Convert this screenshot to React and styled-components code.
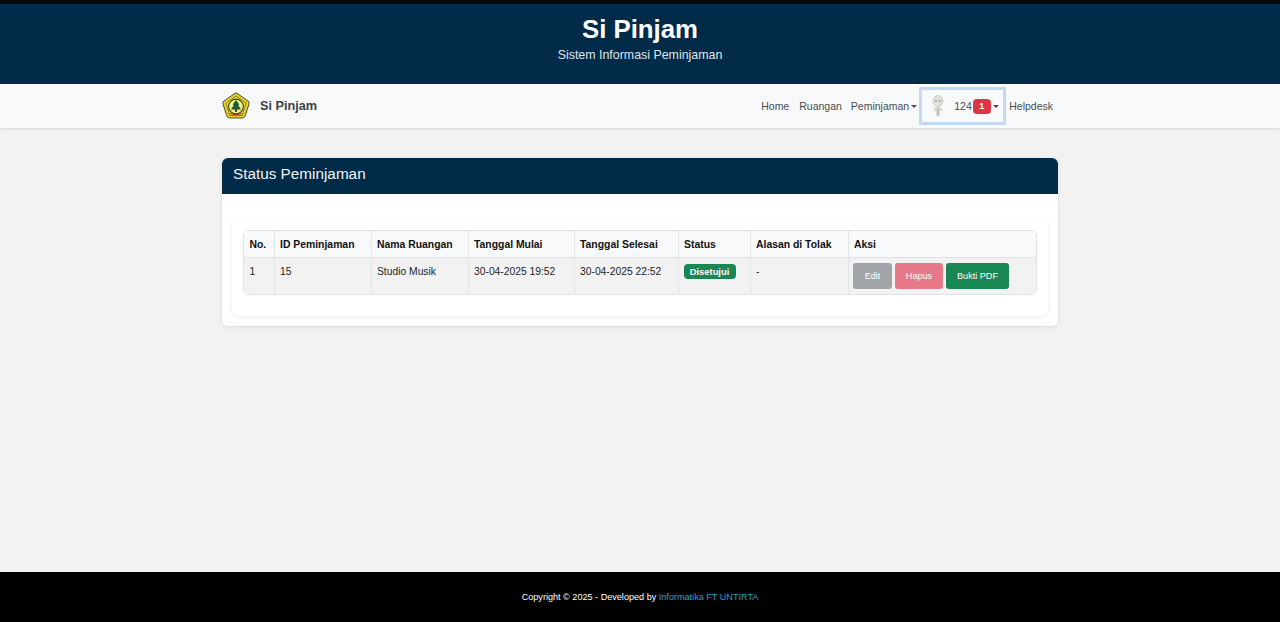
import React from 'react';
import styled, { createGlobalStyle } from 'styled-components';

const GlobalStyle = createGlobalStyle`
  html, body {
    margin: 0;
    padding: 0;
    background: #f2f2f2;
    font-family: "Liberation Sans", Arial, sans-serif;
  }
  * {
    box-sizing: border-box;
  }
`;

const columns = [
  { title: 'No.', width: 30, value: '1' },
  { title: 'ID Peminjaman', width: 97, value: '15' },
  { title: 'Nama Ruangan', width: 97, value: 'Studio Musik' },
  { title: 'Tanggal Mulai', width: 106, value: '30-04-2025 19:52' },
  { title: 'Tanggal Selesai', width: 104, value: '30-04-2025 22:52' },
  { title: 'Status', width: 72, badge: 'Disetujui' },
  { title: 'Alasan di Tolak', width: 98, value: '-' },
  { title: 'Aksi', width: 190, actions: true },
];

function Logo() {
  return (
    <svg width="28" height="28" viewBox="0 0 28 28">
      <path d="M14 1 Q15 1 16 2 L26 9 Q27.500 10 27 12 L23.500 23 Q23 25.500 20.500 26 L7.500 26 Q5 25.500 4.500 23 L1 12 Q0.500 10 2 9 L12 2 Q13 1 14 1 Z" fill="#e4cf2a" stroke="#54501f" strokeWidth="1" />
      <path d="M14 4 L24 11.200 L20.300 23.500 L7.700 23.500 L4 11.200 Z" fill="#f3df33" stroke="#77701e" strokeWidth="0.8" strokeLinejoin="round" />
      <circle cx="14" cy="14.500" r="7.400" fill="#f6ee8e" stroke="#2f4f2a" strokeWidth="1.100" />
      <polygon points="14,8 17.500,12.800 16,12.800 19,17.500 9,17.500 12,12.800 10.500,12.800" fill="#1c5a33" />
      <rect x="13" y="17.200" width="2" height="2.600" fill="#33261a" />
      <path d="M8 21.500 Q14 24 20 21.500" fill="none" stroke="#a02c22" strokeWidth="1" />
    </svg>
  );
}

function Avatar() {
  return (
    <svg width="16" height="22" viewBox="0 0 16 22">
      <ellipse cx="8" cy="6" rx="5" ry="5.400" fill="#e0e0de" stroke="#cbcbc8" strokeWidth="1" />
      <circle cx="6" cy="6" r="1.300" fill="#b5b5b2" />
      <circle cx="10" cy="6" r="1.300" fill="#b5b5b2" />
      <path d="M4.500 12 h7 l1 4 h-2.500 v5 h-4 v-5 h-2.500 z" fill="#dadad8" />
      <rect x="7" y="13" width="2" height="7" fill="#bfbfbc" />
    </svg>
  );
}

export default function App() {
  return (
    <Page>
      <GlobalStyle />
      <Masthead>
        <SiteTitle>Si Pinjam</SiteTitle>
        <SiteSubtitle>Sistem Informasi Peminjaman</SiteSubtitle>
      </Masthead>
      <Navbar>
        <NavInner>
          <Brand>
            <Logo />
            <BrandName>Si Pinjam</BrandName>
          </Brand>
          <NavLinks>
            <NavLink>Home</NavLink>
            <NavLink>Ruangan</NavLink>
            <DropdownLink>
              Peminjaman
              <Caret />
            </DropdownLink>
            <UserToggle>
              <Avatar />
              <UserId>124</UserId>
              <CountBadge>1</CountBadge>
              <Caret />
            </UserToggle>
            <NavLink>Helpdesk</NavLink>
          </NavLinks>
        </NavInner>
      </Navbar>
      <Main>
        <Card>
          <CardHeader>Status Peminjaman</CardHeader>
          <CardBody>
            <InnerCard>
              <TableWrap>
                <Table>
                  <thead>
                    <tr>
                      {columns.map((col) => (
                        <Th key={col.title} style={{ width: col.width }}>{col.title}</Th>
                      ))}
                    </tr>
                  </thead>
                  <tbody>
                    <tr>
                      {columns.map((col) => (
                        <Td key={col.title}>
                          {col.value}
                          {col.badge && <StatusBadge>{col.badge}</StatusBadge>}
                          {col.actions && (
                            <Actions>
                              <ActionButton $bg="#a1a5aa" $width={39}>Edit</ActionButton>
                              <ActionButton $bg="#e77a89" $width={48}>Hapus</ActionButton>
                              <ActionButton $bg="#198754" $width={63}>Bukti PDF</ActionButton>
                            </Actions>
                          )}
                        </Td>
                      ))}
                    </tr>
                  </tbody>
                </Table>
              </TableWrap>
            </InnerCard>
          </CardBody>
        </Card>
      </Main>
      <Footer>
        Copyright © 2025 - Developed by&nbsp;<FooterLink>Informatika FT UNTIRTA</FooterLink>
      </Footer>
    </Page>
  );
}

const Page = styled.div`
  display: flex;
  flex-direction: column;
  min-height: 622px;
`;

const Masthead = styled.header`
  height: 84px;
  background: #012b48;
  border-top: 4px solid #07090b;
  padding-top: 10px;
  text-align: center;
  color: #fff;
`;

const SiteTitle = styled.h1`
  margin: 0;
  font-size: 25.8px;
  line-height: 30px;
  font-weight: 700;
`;

const SiteSubtitle = styled.p`
  margin: 3px 0 0;
  font-size: 12.4px;
  line-height: 17px;
  color: #dfe6ea;
`;

const Navbar = styled.nav`
  height: 44px;
  background: #f8f9fa;
  box-shadow: 0 1px 3px rgba(0, 0, 0, 0.12);
`;

const NavInner = styled.div`
  width: 836px;
  height: 100%;
  margin: 0 auto;
  display: flex;
  align-items: center;
  justify-content: space-between;
`;

const Brand = styled.div`
  display: flex;
  align-items: center;
  gap: 10px;
  margin-top: -1px;
`;

const BrandName = styled.span`
  font-size: 12.7px;
  font-weight: 700;
  color: #3d4144;
`;

const NavLinks = styled.div`
  display: flex;
  align-items: center;
`;

const NavLink = styled.a`
  display: flex;
  align-items: center;
  padding: 0 5px;
  font-size: 10.5px;
  color: #4a4d50;
`;

const DropdownLink = styled(NavLink)`
  padding: 0 3px 0 4px;
`;

const Caret = styled.span`
  display: inline-block;
  margin-left: 2px;
  border-top: 3px solid #4a4d50;
  border-left: 3px solid transparent;
  border-right: 3px solid transparent;
`;

const UserToggle = styled.a`
  display: flex;
  flex-shrink: 0;
  align-items: center;
  height: 38px;
  width: 87px;
  margin: 0 -2px 0 -1px;
  padding-left: 8px;
  border: 3px solid #c4d9f3;
  font-size: 10.5px;
  color: #4a4d50;
`;

const UserId = styled.span`
  margin-left: 8px;
`;

const CountBadge = styled.span`
  width: 18px;
  height: 15px;
  margin-left: 1px;
  border-radius: 4px;
  background: #dc3545;
  color: #fff;
  font-size: 9px;
  font-weight: 700;
  line-height: 15px;
  text-align: center;
`;

const Main = styled.main`
  flex: 1;
  padding-top: 30px;
`;

const Card = styled.section`
  width: 836px;
  margin: 0 auto;
  border-radius: 6px;
  background: #fff;
  box-shadow: 0 1px 4px rgba(0, 0, 0, 0.1);
`;

const CardHeader = styled.div`
  height: 36px;
  padding: 6px 11px 0;
  border-radius: 6px 6px 0 0;
  background: #012b48;
  color: #f2f5f7;
  font-size: 15.3px;
  line-height: 19px;
`;

const CardBody = styled.div`
  padding: 26px 10px 10px;
`;

const InnerCard = styled.div`
  height: 96px;
  padding: 10px 11px;
  border-radius: 6px;
  background: #fff;
  box-shadow: 0 1px 4px rgba(0, 0, 0, 0.1);
`;

const TableWrap = styled.div`
  width: 794px;
  border: 1px solid #dee2e6;
  border-radius: 6px;
  overflow: hidden;
`;

const Table = styled.table`
  width: 100%;
  border-collapse: collapse;
  table-layout: fixed;
  font-size: 10.3px;
  color: #212529;
`;

const Th = styled.th`
  height: 26px;
  padding: 1px 5.5px 0;
  background: #f8f9fa;
  border-right: 1px solid #e3e6e9;
  border-bottom: 1px solid #dee2e6;
  text-align: left;
  font-weight: 700;
  font-size: 10.4px;
  color: #111;
  &:last-child {
    border-right: 0;
  }
`;

const Td = styled.td`
  height: 37px;
  padding: 7px 5.5px 0;
  background: #f2f2f2;
  border-right: 1px solid #e3e6e9;
  vertical-align: top;
  line-height: 14px;
  &:last-child {
    border-right: 0;
  }
`;

const StatusBadge = styled.span`
  display: block;
  width: 52px;
  height: 15px;
  margin: -1px 0 0 -0.5px;
  border-radius: 4px;
  background: #198754;
  color: #fff;
  font-size: 9.4px;
  font-weight: 700;
  line-height: 15px;
  text-align: center;
`;

const Actions = styled.div`
  display: flex;
  gap: 3px;
  margin: -2px 0 0 -1px;
`;

const ActionButton = styled.button`
  width: ${(p) => p.$width}px;
  height: 26px;
  padding: 0;
  border: 0;
  border-radius: 3px;
  background: ${(p) => p.$bg};
  color: #fff;
  font-family: inherit;
  font-size: 9.1px;
`;

const Footer = styled.footer`
  height: 50px;
  background: #000;
  color: #fff;
  display: flex;
  align-items: center;
  justify-content: center;
  font-size: 9.1px;
`;

const FooterLink = styled.a`
  color: #2fa3c4;
`;
